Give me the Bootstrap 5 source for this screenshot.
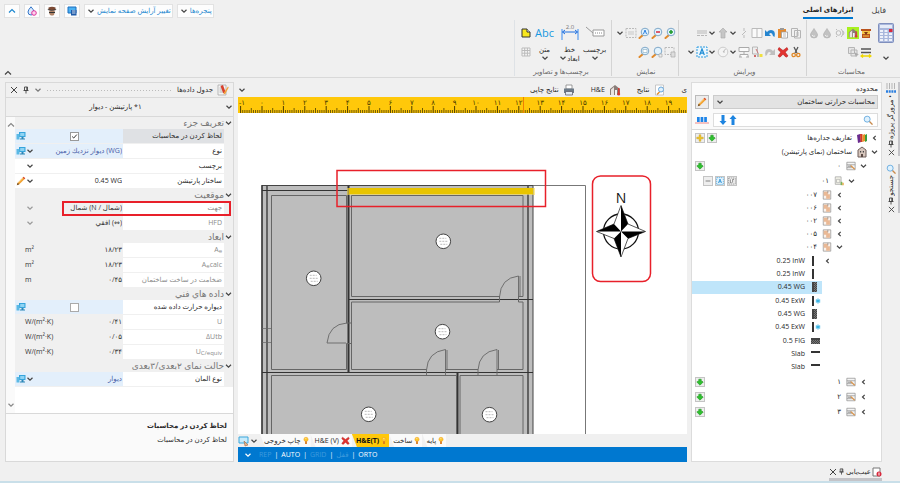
<!DOCTYPE html>
<html lang="fa" dir="rtl">
<head>
<meta charset="utf-8">
<meta name="viewport" content="width=device-width, initial-scale=1">
<title>H&amp;E</title>
<link href="https://cdn.jsdelivr.net/npm/bootstrap@5.3.0/dist/css/bootstrap.min.css" rel="stylesheet">
<style>
:root{--line:#d9d9d9;--ink:#2a2a2a;--dim:#8c8c8c;--blue:#0078d0}
body{font:7px/12px "Open Sans","DejaVu Sans",sans-serif;color:var(--ink);background:#f0f0f0;min-height:100vh}
button,select,input{font:inherit;color:inherit}
svg{display:block;flex:none}
.ico{width:12px;height:12px}
.ico-s{width:10px;height:10px}
.chev{width:8px;height:8px;fill:none;stroke:#444;stroke-width:1.2}
.flat{border:0;background:none;padding:0;display:flex;align-items:center;justify-content:center}
/* title row */
.topline{height:20px}
.topbtn{background:#fdfdfd;border:1px solid #e2e2e2;height:14px;min-width:16px;color:#1c87cf}
.topbtn.word{padding:0 1px 0 2px;gap:2px}
.maintab{color:#444;text-decoration:none;height:19px;padding-top:4px}
.maintab.file{font-size:8px;padding-right:14px;padding-left:2px}
.maintab.on{font-weight:700;color:#222;border-bottom:2px solid var(--blue)}
/* ribbon */
.ribbon{height:58px;border-bottom:1px solid var(--line)}
.rgroup{border-right:1px solid #d4d4d4;height:56px}
.rgroup.first{border-right:0}
.rgroup.view{padding:0 2px 0 4px}
.rlabel{color:#666;line-height:8px;text-align:center}
.tools{height:19px}
.tools .flat{width:13px;height:13px}
.tools .flat.dd{width:8px}
.toolset{padding-top:3px}
.calcbtn{width:20px;height:42px}
.bigbtn{width:25px;height:42px;line-height:9px}
.bigcap{margin-top:4px}
.abc{color:#1898e0;font-size:11px}
.bigico{height:18px;display:flex;align-items:center}
/* property panel */
.props{width:229px;border:1px solid var(--line);margin:4px 0 0 5px}
.ptitle{height:15px;border-bottom:1px solid var(--line)}
.ptitle .chev{stroke:#777}
.dots{height:3px;background-image:radial-gradient(#bbb 30%,transparent 35%);background-size:3px 3px}
.pselect{height:19px;border-bottom:1px solid var(--line)}
.pselect select,.prow select{appearance:none;border:0;background:transparent;outline:0;padding:0}
.pscroll{width:9px;background:#fafafa}
.gridbg{background:#f0f0f0}
.gridbg sub{font-size:6px;bottom:-1px}
.phead{height:12px;font-size:9px;color:#777}
.phead .chev{width:9px}
.prow{height:15px}
.prow label,.prow .pname{width:101px;background:#fff;border-bottom:1px solid #f0f0f0;padding:0 2px;line-height:14px;white-space:nowrap}
.prow .pval{border-bottom:1px solid #f0f0f0;line-height:14px;padding:0 1px;white-space:nowrap}
.prow .edge{width:9px}
.prow.ro{color:#333}
.prow.ro .pname,.prow.ro label{color:var(--dim)}
.prow.ro .chev{stroke:#999}
.prow.ed .pval{background:#fff}
.prow.hi .pval{background:#e3effb;color:#4860a8}
.prow.sel label{background:#dfe1e4}
.prow select{width:72px;flex:1;height:14px}
.prow .pic{width:10px}
.tick{width:9px;height:9px;border-radius:0!important;margin:0!important;float:none!important;border:1px solid #aaa}
.tick:checked{background-color:#fff;border-color:#999;background-image:url("data:image/svg+xml,%3Csvg xmlns='http://www.w3.org/2000/svg' viewBox='0 0 9 9'%3E%3Cpath d='M1.5 4.5l2 2 4-4.5' fill='none' stroke='%23222' stroke-width='1.2'/%3E%3C/svg%3E")}
.unit{width:60px;text-align:left;padding-left:9px}
.facing{position:relative}
.facing::after{content:"";position:absolute;right:2px;left:47px;top:0;bottom:0;border:2px solid #e8202a;pointer-events:none}
.pdesc{height:48px;background:#fafafa;border-top:1px solid var(--line);padding:5px 6px}
.pdesc p{line-height:14px;margin:0}
/* drawing area */
.drawing{margin:0 4px;min-width:0}
.viewbar{height:19px;padding-top:5px}
.ruler{background:#ffc80a;height:16px;width:100%}
.sheet{background:#fff;min-height:0}
.sheet svg{width:100%;height:100%;min-height:321px}
.dtabs{height:13px}
.dtab{border:0;background:#fafafa;height:13px;padding:0 2px 0 4px;clip-path:polygon(0 0,100% 0,100% 100%,5px 100%);white-space:nowrap;display:flex;align-items:center;gap:2px;line-height:12px}
.dtab.on{background:#ffc80a;font-weight:700;color:#111}
.dtabsel{padding-right:2px}
.status{background:var(--blue);height:15px;color:#fff;padding:0 6px;gap:3px}
.status .chev{stroke:#fff}
.status .off{color:#3f9bdd}
/* project panel */
.browser{width:191px;border:1px solid #dcdcdc;background:#fff;margin:4px 2px 0 0}
.bhead{background:#fafafa;border-bottom:1px solid var(--line);padding:0 3px;height:47px}
.bhead .scope{appearance:none;background:#e3e3e3;border:1px solid #ccc;border-radius:0;height:14px;padding:0 2px;width:100%}
.bhead .chev{position:absolute;left:3px;top:3px}
.sqb{width:14px;height:14px;border:1px solid #bbb;background:#ececec}
.find{background:#fff;border:1px solid #ddd;height:14px}
.find input{border:0;outline:0;min-width:0;width:40px;background:none;padding:0}
.trow{height:14px;padding:0 1px 0 3px}
.trow.t15{height:15px}
.kids .trow{height:auto;flex:1}
.rooms{height:66px}.elems{height:120px}
.l1{padding-right:12px}.l2{padding-right:24px}.l3{padding-right:36px}.l4{padding-right:48px}
.twist{width:11px}
.tico{width:14px;display:flex;justify-content:center}
.tname{padding-right:3px}
.picked{background:#bfe5fa}
.trow.full{padding-left:0}
.mini{width:10px;height:10px;border:1px solid #c4c4c4;background:#eee;margin-right:2px}
/* side tabs */
.siderail{width:16px;padding-top:4px}
.stab{border-right:2px solid #c4c4c8;gap:1px}
.vtext{writing-mode:vertical-rl;transform:rotate(180deg);line-height:12px;white-space:nowrap}
.bottom{height:21px;border-bottom:2px solid #c9dfe9;padding-right:18px}
.btab{border-bottom:3px solid #c4c4c8;height:16px;gap:1px}
</style>
<script src="https://cdn.jsdelivr.net/npm/bootstrap@5.3.0/dist/js/bootstrap.bundle.min.js"></script>
</head>
<body class="d-flex flex-column">
<svg width="0" height="0" class="position-absolute" aria-hidden="true">
<defs>
<symbol id="dn" viewBox="0 0 8 8"><path d="M1.500 2.800L4 5.200l2.500-2.400"/></symbol>
<symbol id="up" viewBox="0 0 8 8"><path d="M1 5.500L4 2.500l3 3"/></symbol>
<symbol id="lf" viewBox="0 0 8 8"><path d="M5.200 1.800L3 4l2.200 2.200"/></symbol>
<symbol id="x" viewBox="0 0 8 8"><path d="M1 1l6 6M7 1L1 7" stroke="#444" fill="none"/></symbol>
<symbol id="pin" viewBox="0 0 8 8"><path d="M2.500 1h3v3.500h-3zM1.500 4.500h5M4 4.500v3M4.800 1v3.500" stroke="#444" stroke-width=".9" fill="none"/></symbol>
<symbol id="pc" viewBox="0 0 10 10"><path d="M3 1h6.500v5H3z" fill="#35a4dc"/><path d="M4.200 2h4.200v3H4.200z" fill="#8fd3f3"/><path d="M5.500 6h2v1.500H9v1H4v-1h1.500z" fill="#2c87b8"/><path d="M.5 3h3v5.500h-3z" fill="#5bb9e5"/></symbol>
<symbol id="pencil" viewBox="0 0 12 12"><path d="M1 11l1-3 7-7 2 2-7 7z" fill="#f0a030"/><path d="M8 2l1-1.200 2.200 2L10 4z" fill="#d94a38"/><path d="M1 11l1-3 2 2z" fill="#6b4a28"/><path d="M3 8l5.500-5.500" stroke="#ffd27a"/></symbol>
<symbol id="note" viewBox="0 0 12 12"><path d="M1 1h8v10H1z" fill="#f4f4f4" stroke="#aaa" stroke-width=".8"/><path d="M2.500 4h4M2.500 6h4M2.500 8h4" stroke="#999" stroke-width=".7"/><path d="M3.500 2L6 1l2.500 7-.5 2-2-1.200z" fill="#d8402c"/><path d="M11 2.500l-4 6-.5 2 2-1 3.200-6z" fill="#f2a43c"/></symbol>
<symbol id="mag" viewBox="0 0 12 12"><path d="M5 8L1.500 11" stroke="#e08a2c" stroke-width="2" stroke-linecap="round"/><circle cx="7" cy="5" r="3.800" fill="#e3f3fd" stroke="#7fa8c8"/></symbol>
<symbol id="magr" viewBox="0 0 12 12"><path d="M7.500 7.500L11 11" stroke="#c88a4c" stroke-width="1.600" stroke-linecap="round"/><circle cx="5" cy="5" r="3.600" fill="#dff1fd" stroke="#5ba3dc"/></symbol>
<symbol id="calc" viewBox="0 0 16 20"><rect x=".5" y=".5" width="15" height="19" rx="1" fill="#a9b7dc" stroke="#7f8fbd"/><path d="M2 2h12v3H2z" fill="#e4ebf8"/><path d="M2 7h3v2H2zM6.500 7h3v2h-3zM2 10h3v2H2zM6.500 10h3v2h-3zM11 10h3v2h-3zM2 13h3v2H2zM6.500 13h3v2h-3zM11 13h3v2h-3zM2 16h3v2H2zM6.500 16h3v2h-3zM11 16h3v2h-3z" fill="#eef1fa"/><path d="M11 6h3.500v3H11z" fill="#d8283c"/></symbol>
<symbol id="brick" viewBox="0 0 12 12"><path d="M1 2h10v2H1zM2 7h8v4H2z" fill="#b9521c"/><path d="M2 4h8v3H2z" fill="#f5c445"/><path d="M4 5l2 3 2-3z" fill="#7c3512"/><path d="M3 9h6" stroke="#f5c445"/></symbol>
<symbol id="house" viewBox="0 0 12 12"><path d="M1 5l5-4 5 4v6H1z" fill="#8a7d78"/><path d="M2 5.500L5 3v8H2z" fill="#e9e4e0"/><path d="M6 6h2v5H6z" fill="#f3f3f3"/><path d="M9 4h1.500v6H9z" fill="#d83a34"/><circle cx="9.700" cy="10" r="1.500" fill="#d83a34"/></symbol>
<symbol id="drop" viewBox="0 0 12 12"><path d="M6 1.500C8 5 9.500 6 9.500 8a3.500 3 0 0 1-7 0C2.500 6 4 5 6 1.500z" fill="#c2c2c2" stroke="#aaa" stroke-width=".6"/><path d="M4 8q1 2 3 1" stroke="#eee" fill="none"/></symbol>
<symbol id="sun" viewBox="0 0 12 12"><circle cx="4.500" cy="6" r="2.300" fill="none" stroke="#bbb"/><path d="M2 2l1 1M2 10l1-1M7 2q4 4 0 8M9 4q2 2 0 4" fill="none" stroke="#bbb"/></symbol>
<symbol id="layers" viewBox="0 0 12 12"><path d="M1.500 1.500h6v6h-6zM4 4h6v6H4z" fill="#e6e6e6" stroke="#b5b5b5"/><path d="M7 6l2 5 1-2 2-.5z" fill="#aaa"/></symbol>
<symbol id="dimy" viewBox="0 0 12 12"><path d="M1 3h10M1 6.500h10" stroke="#555" stroke-width="1.600"/><path d="M1 10h10M3 8.500L1 10l2 1.500M9 8.500l2 1.500-2 1.500" stroke="#f0d800" fill="none" stroke-width="1.300"/></symbol>
<symbol id="copy" viewBox="0 0 12 12"><path d="M1.500 1.500h6v8h-6zM4.500 3.500h6v7.500h-6z" fill="#f1f1f1" stroke="#b4b4b4"/><path d="M6 6h3M6 8h3" stroke="#bbb"/></symbol>
<symbol id="paste" viewBox="0 0 12 12"><path d="M1 2h8v9H1z" fill="#e68a2d"/><path d="M3 1h4v2H3z" fill="#999"/><path d="M4.500 5h6v6h-6z" fill="#fff" stroke="#999" stroke-width=".8"/><path d="M6 7h3M6 9h3" stroke="#bbb"/></symbol>
<symbol id="undo" viewBox="0 0 12 12"><path d="M1 3v6h6L5 7q3-2.500 4 2l1.500 1Q12 3 7 3 4.500 3 3 5z" fill="#2585cf"/></symbol>
<symbol id="redo" viewBox="0 0 12 12"><path d="M11 3v6H5l2-2q-3-2.500-4 2l-1.500 1Q0 3 5 3q2.500 0 4 2z" fill="#bfbfbf"/></symbol>
<symbol id="split" viewBox="0 0 12 12"><path d="M1 1.500h10v9H1zM6 1.500v9" fill="#fafafa" stroke="#bbb"/></symbol>
<symbol id="cutl" viewBox="0 0 12 12"><path d="M6 1v3M6 8v3M8 4L4 8" stroke="#bbb" fill="none"/></symbol>
<symbol id="arrg" viewBox="0 0 12 12"><path d="M6 1l4 4H8v6H4V5H2z" fill="#c6c6c6" stroke="#aaa" stroke-width=".6"/></symbol>
<symbol id="lines" viewBox="0 0 12 12"><path d="M1 4h10M1 6h10M1 8.500h3M5 8.500h3M9 8.500h2" stroke="#b8b8b8"/></symbol>
<symbol id="scis" viewBox="0 0 12 12"><path d="M4 1l3 6M8 1L5 7" stroke="#555" stroke-width="1.300"/><circle cx="3.700" cy="9" r="1.700" fill="none" stroke="#e08a2a" stroke-width="1.300"/><circle cx="8.300" cy="9" r="1.700" fill="none" stroke="#e08a2a" stroke-width="1.300"/></symbol>
<symbol id="del" viewBox="0 0 12 12"><path d="M2 1.500l4 3 4-3 1 2-2.800 2.700L11 10l-2 1.200-3-3-3 3L1 10l2.800-3.800L1 3.500z" fill="#e2332f" stroke="#b61c1c" stroke-width=".6"/></symbol>
<symbol id="report" viewBox="0 0 12 12"><path d="M1.500 1h5v7h-5z" fill="#eee" stroke="#aaa" stroke-width=".8"/><path d="M5 3l2 4" stroke="#c77"/><path d="M6 7h2v4H6z" fill="#bbb"/><path d="M8.500 8h3v3h-3z" fill="#f0e03e"/><path d="M3 9h2v2H3z" fill="#d06a6a"/></symbol>
<symbol id="tree" viewBox="0 0 12 12"><path d="M1 1.500h10v4H1zM6 5.500v3M2 11V8.500h8V11M1 11h3M8 11h3" fill="#fafafa" stroke="#aaa"/></symbol>
<symbol id="clock" viewBox="0 0 12 12"><circle cx="6" cy="6" r="4.800" fill="#f4f4f4" stroke="#ccc"/><path d="M6 6l2.500-3M6 6h2" stroke="#bbb"/></symbol>
<symbol id="texta" viewBox="0 0 12 12"><path d="M1 1h10v10H1z" fill="#eaf6fe" stroke="#2b9be0" stroke-dasharray="2 1"/><path d="M3.700 9L6 3l2.300 6M4.500 7.200h3" fill="none" stroke="#1e8cd4" stroke-width="1.200"/></symbol>
<symbol id="dash" viewBox="0 0 12 12"><path d="M1 1.500h10v9H1z" fill="none" stroke="#bbb" stroke-dasharray="2 1"/><path d="M3 5h6M3 7h6" stroke="#c8c8c8"/></symbol>
<symbol id="dashd" viewBox="0 0 12 12"><path d="M1 1.500h10v9H1z" fill="#f6f6f6" stroke="#777" stroke-dasharray="2 1"/><path d="M3.500 3.500v5h2M7 8.500v-5h2" stroke="#555" fill="none"/></symbol>
<symbol id="dashh" viewBox="0 0 12 12"><path d="M1 1.500h9v7H1z" fill="none" stroke="#bbb" stroke-dasharray="2 1"/><path d="M7 6h4v5H7z" fill="#ddd" stroke="#aaa" stroke-width=".7"/></symbol>
<symbol id="doc" viewBox="0 0 10 10"><path d="M1 1h5l3 3v5H1z" fill="#f8e71e" stroke="#333"/><path d="M6 1v3h3" fill="#fff" stroke="#333"/></symbol>
<symbol id="gridi" viewBox="0 0 10 10"><path d="M1 1h8v8H1zM1 3.500h8M1 6.200h8M3.700 1v8M6.400 1v8" fill="#f6f6f6" stroke="#bbb"/></symbol>
<symbol id="printer" viewBox="0 0 12 12"><path d="M3 1h6v4H3z" fill="#fff" stroke="#777" stroke-width=".7"/><path d="M1 4.500h10V9H1z" fill="#6c7a88"/><path d="M2.500 7.500h7V11h-7z" fill="#dfe9f2" stroke="#556" stroke-width=".7"/></symbol>
<symbol id="res" viewBox="0 0 12 12"><path d="M1.500 1h8v10h-8z" fill="#fff" stroke="#bbb" stroke-width=".8"/><path d="M5.500 8L3 10.500" stroke="#e08a2c" stroke-width="1.400"/><circle cx="7" cy="5.500" r="2.500" fill="#dff1fd" stroke="#6aa8dc"/></symbol>
<symbol id="green" viewBox="0 0 10 10"><path d="M5 9L1 5l1.500-1h1V1.500h3V4h1L9 5z" fill="#2fc12f" stroke="#1b8f1b" stroke-width=".7"/></symbol>
<symbol id="plus" viewBox="0 0 10 10"><path d="M4 1h2v3h3v2H6v3H4V6H1V4h3z" fill="#f5c81c" stroke="#c49a10" stroke-width=".6"/></symbol>
<symbol id="minus" viewBox="0 0 10 10"><path d="M2 4h6v2H2z" fill="#aaa"/></symbol>
<symbol id="books" viewBox="0 0 12 12"><path d="M1 3l3-1 1 8-3 1z" fill="#6a2c8e"/><path d="M4 2h2.500v8H4.500z" fill="#d23b28"/><path d="M6.500 3L9 2v7l-2.500 1z" fill="#e89324"/><path d="M9 3l2-1v7l-2 1z" fill="#3b9c3b"/></symbol>
<symbol id="bld" viewBox="0 0 12 12"><path d="M2 4l4-3 4 3v7H2z" fill="#d6c6bd" stroke="#6f5f5a"/><path d="M4 5h1.200v1.500H4zM6.800 5H8v1.500H6.800z" fill="#444"/><path d="M5 8h2v3H5z" fill="#5b4a44"/></symbol>
<symbol id="floor" viewBox="0 0 12 12"><path d="M1 1.500h10v9H1zM1 4.500h10M1 8h6" fill="#f5f5f5" stroke="#888" stroke-width=".8"/><path d="M5.500 5.500l5 4.500" stroke="#d5924c" stroke-width="1.500"/><path d="M2 6.200h4" stroke="#777"/></symbol>
<symbol id="plan" viewBox="0 0 12 12"><path d="M1.500 3V1h7v9h-7z" fill="#f4f4ea" stroke="#999" stroke-width=".8"/><path d="M3 4h4v4H3z" fill="none" stroke="#aaa" stroke-width=".8"/><path d="M8 7h2v4H8z" fill="#79b55a"/><path d="M10 8h1.600v3H10z" fill="#e6a03c"/></symbol>
<symbol id="room" viewBox="0 0 12 12"><path d="M1.500 1h9v10h-9z" fill="#fbf3ec" stroke="#888" stroke-width=".8"/><path d="M2 2h5v3h2.500v5.500H5V7H2z" fill="#eab995"/><path d="M7 1v3" stroke="#888" stroke-width=".8"/></symbol>
<symbol id="snow" viewBox="0 0 6 6"><path d="M3 .5v5M.8 1.700l4.400 2.600M5.200 1.700L.8 4.300" stroke="#3bb4e4" stroke-width="1.100"/></symbol>
<symbol id="walls" viewBox="0 0 12 12"><path d="M2 1v6M4.500 1v6M7 1v6M9.500 1v6" stroke="#b5b5b5"/><path d="M1 9.500h10" stroke="#2b7fe0" stroke-width="2.400" stroke-dasharray="2 .7"/></symbol>
<symbol id="bulb" viewBox="0 0 8 10"><circle cx="4" cy="3.500" r="2.800" fill="#fdc62c" stroke="#f2a52a" stroke-width=".7"/><path d="M3 2.500h1.500" stroke="#fff3c0"/><path d="M2.800 6h2.400v3.500H2.800z" fill="#d97a1e"/></symbol>
<pattern id="hatch" width="2" height="2" patternUnits="userSpaceOnUse"><path d="M0 0h1v1H0zM1 1h1v1H1z" fill="#777"/></pattern>
</defs>
</svg>

<header>
<div class="topline d-flex align-items-start justify-content-between">
 <nav class="d-flex gap-3">
  <a class="maintab file" href="#">فایل</a>
  <a class="maintab on" href="#">ابزارهای اصلی</a>
 </nav>
 <div class="d-flex gap-1 pt-1 ps-1 align-items-start">
  <button class="flat topbtn word">پنجره‌ها<svg class="chev"><use href="#dn"/></svg></button>
  <button class="flat topbtn word">تغییر آرایش صفحه نمایش<svg class="chev"><use href="#dn"/></svg></button>
  <button class="flat topbtn" aria-label="نمایش"><svg class="ico-s" viewBox="0 0 10 10"><path d="M1 1h8v6H1z" fill="#4bb1f2" stroke="#1b6fc0"/><path d="M4 4h5.500v5.500H4z" fill="#1e5aa8"/><path d="M5 5h3.500M5 7h3.500" stroke="#fff" stroke-width=".8"/></svg></button>
  <button class="flat topbtn" aria-label="سازنده"><svg class="ico-s" viewBox="0 0 10 10"><path d="M1.500 1.500q3.500-1.500 7 0v2.500q-3.500 1-7 0z" fill="#7c4a34"/><path d="M.8 3.500q4 2 8.400 0" stroke="#333" stroke-width=".8" fill="none"/><path d="M2 5.200q4-1 6 0L7 9q-2 1-3.500.3-1.500-1-1.500-4.100z" fill="#b08468"/><path d="M2 6.500h6" stroke="#333"/></svg></button>
  <button class="flat topbtn" aria-label="رطوبت"><svg class="ico-s" viewBox="0 0 10 10"><path d="M4 .8Q7 4 7 6A3 3 0 0 1 1 6Q1 4 4 .8z" fill="#dceafd" stroke="#3577c8"/><circle cx="7" cy="7" r="2.300" fill="#fbd3ec" stroke="#e0329c"/></svg></button>
  <button class="flat topbtn" aria-label="بستن نوار"><svg class="chev"><use href="#up" stroke="#1c87cf"/></svg></button>
 </div>
</div>
<div class="ribbon d-flex">
 <section class="rgroup first pe-1 d-flex flex-column justify-content-between">
  <div class="d-flex gap-1">
   <button class="flat calcbtn flex-column justify-content-between toolset" aria-label="محاسبه"><svg width="16" height="20"><use href="#calc"/></svg><svg class="chev"><use href="#dn"/></svg></button>
   <div class="toolset"><div class="tools d-flex align-items-center">
     <button class="flat" aria-label="مصالح"><svg class="ico"><use href="#brick"/></svg></button><button class="flat" aria-label="H&amp;E"><svg class="ico" viewBox="0 0 12 12"><rect width="12" height="12" fill="#a8f01e"/><use href="#house" x="1" y="1" width="10" height="10"/></svg></button><button class="flat" aria-label="تابش"><svg class="ico"><use href="#sun"/></svg></button><button class="flat" aria-label="رطوبت ۱"><svg class="ico"><use href="#drop"/></svg></button><button class="flat" aria-label="رطوبت ۲"><svg class="ico"><use href="#drop"/></svg></button></div>
    <div class="tools d-flex align-items-center"><button class="flat" aria-label="اندازه"><svg class="ico"><use href="#dimy"/></svg></button><button class="flat" aria-label="لایه"><svg class="ico"><use href="#layers"/></svg></button></div></div>
  </div>
  <div class="rlabel">محاسبات</div>
 </section>
 <section class="rgroup pe-1 ps-2 d-flex flex-column justify-content-between">
  <div class="toolset"><div class="tools d-flex align-items-center">
    <button class="flat" aria-label="کپی"><svg class="ico"><use href="#copy"/></svg></button><button class="flat" aria-label="چسباندن"><svg class="ico"><use href="#paste"/></svg></button><button class="flat" aria-label="واگرد"><svg class="ico"><use href="#undo"/></svg></button><button class="flat" aria-label="تقسیم"><svg class="ico"><use href="#split"/></svg></button><button class="flat" aria-label="برش خط"><svg class="ico"><use href="#cutl"/></svg></button><button class="flat dd" aria-label="بیشتر"><svg class="chev"><use href="#dn"/></svg></button><button class="flat" aria-label="بالا"><svg class="ico"><use href="#arrg"/></svg></button><button class="flat dd" aria-label="بیشتر"><svg class="chev"><use href="#dn"/></svg></button><button class="flat" aria-label="خطوط"><svg class="ico"><use href="#lines"/></svg></button></div>
   <div class="tools d-flex align-items-center">
    <button class="flat" aria-label="برش"><svg class="ico"><use href="#scis"/></svg></button><button class="flat" aria-label="حذف"><svg class="ico"><use href="#del"/></svg></button><button class="flat" aria-label="ازنو"><svg class="ico"><use href="#redo"/></svg></button><button class="flat" aria-label="گزارش"><svg class="ico"><use href="#report"/></svg></button><button class="flat" aria-label="ساختار"><svg class="ico"><use href="#tree"/></svg></button><button class="flat dd" aria-label="بیشتر"><svg class="chev"><use href="#dn"/></svg></button><button class="flat" aria-label="زاویه"><svg class="ico"><use href="#clock"/></svg></button><button class="flat dd" aria-label="بیشتر"><svg class="chev"><use href="#dn"/></svg></button><button class="flat" aria-label="انتخاب متن"><svg class="ico"><use href="#texta"/></svg></button><button class="flat dd" aria-label="بیشتر"><svg class="chev"><use href="#dn"/></svg></button></div></div>
  <div class="rlabel">ویرایش</div>
 </section>
 <section class="rgroup view d-flex flex-column justify-content-between">
  <div class="toolset"><div class="tools d-flex align-items-center">
    <button class="flat" aria-label="بزرگنمایی"><svg class="ico" viewBox="0 0 12 12"><use href="#mag"/><path d="M7 3v4M5 5h4" stroke="#1c9a2a" stroke-width="1.500"/></svg></button><button class="flat" aria-label="کوچکنمایی"><svg class="ico" viewBox="0 0 12 12"><use href="#mag"/><path d="M5 5h4" stroke="#d8283c" stroke-width="1.500"/></svg></button><button class="flat" aria-label="همه"><svg class="ico" viewBox="0 0 12 12"><use href="#mag"/><path d="M5.500 7L7 3l1.500 4" stroke="#2b7fe0" fill="none"/></svg></button><button class="flat" aria-label="قاب"><svg class="ico"><use href="#dash"/></svg></button><button class="flat dd" aria-label="بیشتر"><svg class="chev"><use href="#dn"/></svg></button></div>
   <div class="tools d-flex align-items-center">
    <button class="flat" aria-label="جابجایی"><svg class="ico"><use href="#dashh"/></svg></button><button class="flat" aria-label="پنجره"><svg class="ico" viewBox="0 0 12 12"><use href="#mag"/><path d="M8 8h3v3H8z" fill="#eee" stroke="#aaa" stroke-width=".7"/></svg></button><button class="flat" aria-label="صفحه"><svg class="ico" viewBox="0 0 12 12"><use href="#mag"/><path d="M5 3.500h4v3H5z" fill="#fff" stroke="#8ab" stroke-width=".6"/></svg></button></div></div>
  <div class="rlabel">نمایش</div>
 </section>
 <section class="rgroup pe-1 d-flex flex-column justify-content-between border-start">
  <div class="d-flex toolset">
   <button class="flat bigbtn flex-column justify-content-start"><span class="bigico"><svg width="20" height="12" viewBox="0 0 20 12"><path d="M1 1l7 6M8 4h11v6H8z" fill="#fff" stroke="#999"/><path d="M10 7h7" stroke="#888" stroke-dasharray="1 1"/></svg></span><span class="bigcap">برچسب</span><svg class="chev"><use href="#dn"/></svg></button>
   <button class="flat bigbtn flex-column justify-content-start"><span class="bigico"><svg width="18" height="18" viewBox="0 0 18 18" direction="ltr"><text x="9" y="6" font-size="6" text-anchor="middle" fill="#777">2.0</text><path d="M1 6v11M17 6v11" stroke="#3b8cf0"/><path d="M1.500 9h15M4 7L1.500 9 4 11M14 7l2.500 2-2.500 2" stroke="#1d6fe0" fill="none"/></svg></span><span class="bigcap">خط</span><span class="d-flex">ابعاد<svg class="chev"><use href="#dn"/></svg></span></button>
   <button class="flat bigbtn flex-column justify-content-start"><span class="bigico abc">Abc</span><span class="bigcap">متن</span><svg class="chev"><use href="#dn"/></svg></button>
   <div class="ps-1"><div class="tools d-flex align-items-center"><button class="flat" aria-label="یادداشت"><svg class="ico-s"><use href="#doc"/></svg></button></div><div class="tools d-flex align-items-center"><button class="flat" aria-label="جدول"><svg class="ico-s"><use href="#gridi"/></svg></button></div></div>
  </div>
  <div class="rlabel">برچسب‌ها و تصاویر</div>
 </section>
 <button class="flat me-auto align-self-end ps-1" aria-label="جمع کردن نوار"><svg class="chev"><use href="#up"/></svg></button>
</div>
</header>

<main class="d-flex flex-grow-1">
 <aside class="siderail">
  <div class="stab d-flex flex-column align-items-center mb-2"><svg class="ico"><use href="#walls"/></svg><button class="flat vtext">• مرورگر پروژه</button><svg width="8" height="8"><use href="#pin"/></svg><svg width="7" height="7"><use href="#x"/></svg></div>
  <div class="stab d-flex flex-column align-items-center"><svg class="ico-s"><use href="#magr"/></svg><button class="flat vtext">جستجو</button><svg width="8" height="8"><use href="#pin"/></svg><svg width="7" height="7"><use href="#x"/></svg></div>
 </aside>

 <section class="browser flex-shrink-0">
  <div class="bhead">
   <label for="scope" class="d-block">محدوده</label>
   <div class="d-flex gap-1"><div class="position-relative flex-grow-1"><select id="scope" class="scope d-block"><option>محاسبات حرارتی ساختمان</option></select><svg class="chev"><use href="#dn"/></svg></div><button class="flat sqb" aria-label="ویرایش"><svg class="ico-s"><use href="#pencil"/></svg></button></div>
   <div class="d-flex gap-1 pt-1"><div class="find d-flex align-items-center flex-grow-1 px-1"><svg class="ico-s"><use href="#magr"/></svg><input class="flex-grow-1" type="text" aria-label="جستجو"><button class="flat" aria-label="قبلی"><svg class="ico-s" viewBox="0 0 10 10"><path d="M5 0l3.500 4H6.500v6h-3V4h-2z" fill="#1d84e0"/></svg></button><button class="flat" aria-label="بعدی"><svg class="ico-s" viewBox="0 0 10 10"><path d="M5 10L1.500 6h2V0h3v6h2z" fill="#1d84e0"/></svg></button></div>
   <button class="flat" aria-label="دیوارها"><svg width="14" height="10" viewBox="0 0 14 10"><path d="M0 8h14" stroke="#e88"/><path d="M2 2h2.700v5H2zM5.600 2h2.700v5H5.600zM9.200 2h2.700v5H9.200z" fill="#1d84e8"/></svg></button></div>
  </div>
  <div>
   <div class="trow t15 d-flex align-items-center"><svg class="chev twist"><use href="#lf"/></svg><span class="tico"><svg class="ico"><use href="#books"/></svg></span><span class="tname flex-grow-1">تعاریف جداره‌ها</span><button class="flat mini" aria-label="باز"><svg width="8" height="8"><use href="#green"/></svg></button><button class="flat mini" aria-label="افزودن"><svg width="8" height="8"><use href="#plus"/></svg></button></div>
   <div class="trow d-flex align-items-center"><svg class="chev twist"><use href="#dn"/></svg><span class="tico"><svg class="ico"><use href="#bld"/></svg></span><span class="tname">ساختمان (نمای پارتیشن)</span></div>
   <div class="trow l1 d-flex align-items-center"><svg class="chev twist"><use href="#dn"/></svg><span class="tico"><svg class="ico-s"><use href="#floor"/></svg></span><span class="tname flex-grow-1">۰</span><button class="flat mini" aria-label="باز"><svg width="8" height="8"><use href="#green"/></svg></button></div>
   <div class="trow t15 l2 d-flex align-items-center"><svg class="chev twist"><use href="#dn"/></svg><span class="tico"><svg class="ico-s"><use href="#plan"/></svg></span><span class="tname flex-grow-1">۰۱</span><button class="flat mini" aria-label="قاب"><svg width="8" height="8"><use href="#dashd"/></svg></button><button class="flat mini" aria-label="متن"><svg width="8" height="8"><use href="#texta"/></svg></button><button class="flat mini ms-2" aria-label="بستن"><svg width="8" height="8"><use href="#minus"/></svg></button></div>
   <div class="kids rooms d-flex flex-column" id="rooms"></div>
   <div class="kids elems d-flex flex-column" id="elems"></div>
   <div id="floors"></div>
  </div>
 </section>

 <section class="drawing d-flex flex-column flex-grow-1">
  <div class="viewbar d-flex gap-3 align-items-center">
   <span>ی</span>
   <button class="flat gap-1"><svg class="ico"><use href="#res"/></svg>نتایج</button>
   <button class="flat gap-1"><svg class="ico"><use href="#house"/></svg>H&amp;E</button>
   <button class="flat gap-1"><svg class="ico"><use href="#printer"/></svg>نتایج چاپی</button>
   <button class="flat me-auto" aria-label="بیشتر"><svg class="chev"><use href="#dn"/></svg></button>
  </div>
  <svg class="ruler" id="ruler" direction="ltr"></svg>
  <div class="sheet flex-grow-1">
  <svg direction="ltr"><g transform="translate(-238 -113)">
   <path d="M532 185.500h53.500V600" fill="none" stroke="#777"/>
   <path d="M262 185.500h271V600H262z" fill="#bdbdbd" stroke="#444"/>
   <g fill="none" stroke="#333"><path d="M262 185v300M267 186v300M528 186v300" stroke-width="1.300"/><path d="M262 190.500h270M349 299.500h184M262 372.500h271"/><path d="M348.500 186v187M457.500 373v100" stroke-width="2"/></g>
   <g fill="none" stroke="#666"><path d="M351 323h-4.500V195.500h-75v174h75v-26h4.500M499.500 296.500h-148v-101h171.500v101h-4.500M499.500 296v6h-148v67.500h75M518.500 296v6h4.500v67.500h-26M445.500 369.500h32.500M271.500 440v-64.500h185V440M460 440v-64.500h63V440"/>
   <path d="M499.500 297q1-19 19-21v21M520 276v20.500M347 323q-18 1-20 20h19M426.500 375v-5q1-18 19-20.500v26M447 350v20M478 375v-5q1-18 19-20.500v26M498.500 350v20" stroke-width=".9"/><path d="M262 328.500h9.500M262 342.500h9.500M267 331v9" stroke-width=".7"/></g>
   <path d="M347 191.500h188" stroke="#ffe14a" stroke-width="7" opacity=".6"/><path d="M349 191h184" stroke="#e8c400" stroke-width="6"/>
   <g id="marks" fill="#fff" stroke="#444"></g>
   <g fill="none" stroke="#e8202a" stroke-width="1.500"><rect x="337" y="170.500" width="208.500" height="36"/><rect x="592.500" y="176" width="58" height="105.500" rx="8"/></g>
   <text x="621" y="203" text-anchor="middle" font-size="14" fill="#111">N</text>
   <circle cx="621" cy="231.500" r="17.500" fill="#fff" stroke="#111" stroke-width="1.300"/>
   <path d="M621 205.500l7 18.500 17.500 7.500-17.500 7-7 18.500-7-18.500-17.500-7 17.500-7.500z" fill="#fff" stroke="#111" stroke-width=".7"/>
   <path d="M621 231.500v-26l7 18.500zM621 231.500h24.500l-17.500 7zM621 231.500V257l-7-18.500zM621 231.500h-24.500l17.500-7.500z" fill="#000"/>
  </g></svg></div>
  <div class="dtabs d-flex align-items-center" dir="ltr">
   <svg class="ico" viewBox="0 0 12 12"><path d="M1 2h9v6H1z" fill="#c8ebfb" stroke="#3aa7dc"/><path d="M6 6l4 4-3 1z" fill="#eab38a" stroke="#a06a44" stroke-width=".6"/></svg><span class="dtabsel"><svg class="chev"><use href="#dn"/></svg></span>
   <button class="dtab" dir="rtl"><svg width="6" height="9"><use href="#bulb"/></svg>چاپ خروجی</button>
   <button class="dtab" dir="rtl"><svg width="9" height="9"><use href="#del"/></svg><bdi dir="ltr">H&amp;E (V)</bdi></button>
   <button class="dtab on" dir="rtl"><svg width="6" height="9"><use href="#bulb"/></svg><bdi dir="ltr">H&amp;E(T)</bdi></button>
   <button class="dtab" dir="rtl"><svg width="6" height="9"><use href="#bulb"/></svg>ساخت</button>
   <button class="dtab" dir="rtl"><svg width="6" height="9"><use href="#bulb"/></svg>پایه</button>
  </div>
  <div class="status d-flex align-items-center" dir="ltr"><svg class="chev me-1"><use href="#dn"/></svg><span class="off">REP</span><span>|</span><span>AUTO</span><span>|</span><span class="off">GRID</span><span>|</span><span class="off">قفل</span><span>|</span><span>ORTO</span></div>
 </section>

 <section class="props d-flex flex-column flex-shrink-0">
  <div class="ptitle d-flex align-items-center gap-1 px-1"><svg class="ico"><use href="#note"/></svg><span>جدول داده‌ها</span><span class="dots flex-grow-1"></span><svg class="chev"><use href="#dn"/></svg><svg width="8" height="8"><use href="#pin"/></svg><svg width="8" height="8"><use href="#x"/></svg></div>
  <div class="pselect d-flex align-items-center"><svg class="chev"><use href="#dn"/></svg><select class="flex-grow-1 text-center" aria-label="جزء"><option>۱* پارتیشن - دیوار</option></select></div>
  <div class="d-flex flex-grow-1 bg-white">
   <div class="flex-grow-1" id="grid"></div>
   <div class="pscroll d-flex flex-column justify-content-between align-items-center py-1"><svg class="chev"><use href="#up" stroke="#888"/></svg><svg class="chev"><use href="#dn" stroke="#888"/></svg></div>
  </div>
  <div class="pdesc"><p class="fw-bold">لحاظ کردن در محاسبات</p><p>لحاظ کردن در محاسبات</p></div>
 </section>
</main>

<footer class="bottom d-flex align-items-end"><button class="flat btab"><svg class="ico-s" viewBox="0 0 10 10"><path d="M1 1h7v8H1z" fill="#fff" stroke="#777"/><circle cx="7" cy="7" r="2.500" fill="#d8283c"/><path d="M7 5.500v3" stroke="#fff"/></svg>عیب‌یابی<svg width="7" height="7"><use href="#pin"/></svg><svg width="8" height="8"><use href="#x"/></svg></button></footer>

<script>
const el = id => document.getElementById(id);
const icon = (n, c) => `<svg class="${c}"><use href="#${n}"/></svg>`;

/* property grid: heading strings and [kind, name, value, unit, icon] rows */
const rows = [
 'تعریف جزء', ['check sel','لحاظ کردن در محاسبات',true], ['hi list','نوع','(WG) دیوار نزدیك زمین','','pc'], ['ed list','برچسب',''], ['ed list','ساختار پارتیشن','\u200e0.45 WG','','pencil'],
 'موقعیت', ['ro list facing','جهت','(شمال / N) شمال'], ['ro list','HFD','(⇔) افقي'],
 'ابعاد', ['ro','A<sub>e</sub>','۱۸/۲۳','m²'], ['ro','A<sub>e</sub>calc','۱۸/۲۳','m²'], ['ro','ضخامت در ساخت ساختمان','۰/۴۵','m'],
 'داده هاي فني', ['check','دیواره حرارت داده شده',false], ['ro','U','۰/۴۱','W/(m²·K)'], ['ro','ΔUtb','۰/۰۵','W/(m²·K)'], ['ro','U<sub>C/equiv</sub>','۰/۳۴','W/(m²·K)'],
 'حالت نمای ۲بعدی/۳بعدی', ['hi list','نوع المان','دیوار','','pc']];
el('grid').innerHTML = '<div class="gridbg">' + rows.map((r, i) => {
  if (typeof r === 'string') return `<div class="phead d-flex align-items-center">${icon('dn','chev')}<span>${r}</span></div>`;
  const [k, n, v, u, ic] = r;
  let val, name = `<label for="p${i}">${n}</label>`, cls = k;
  if (k.startsWith('check')) { cls += ' hi'; val = `<span class="flex-grow-1 d-flex justify-content-center"><input id="p${i}" type="checkbox" class="form-check-input tick" ${v ? 'checked' : ''}></span>${icon('pc','ico-s')}`; }
  else if (k.includes('list')) val = `<select id="p${i}"><option>${v}</option></select>${icon('dn','chev')}<span class="pic">${ic ? icon(ic,'ico-s') : ''}</span>`;
  else { name = `<span class="pname">${n}</span>`; val = `<bdi>${v}</bdi><span class="flex-grow-1"></span><bdi class="unit" dir="ltr">${u}</bdi>`; }
  return `<div class="prow d-flex ${cls}"><span class="edge"></span>${name}<div class="pval d-flex align-items-center flex-grow-1">${val}</div></div>`;
}).join('') + '</div>';

/* project tree */
const node = (lvl, tw, ic, name, extra = '') => `<div class="trow l${lvl} d-flex align-items-center">${tw ? icon(tw,'chev twist') : '<span class="twist"></span>'}<span class="tico">${ic}</span><span class="tname flex-grow-1">${name}</span>${extra}</div>`;
el('rooms').innerHTML = ['۰۰۷','۰۰۶','۰۰۲','۰۰۵','۰۰۴'].map((n, i) => node(3, i < 4 ? 'lf' : 'dn', icon('room','ico-s'), n)).join('');
const wall = {
  thin: '<path d="M3 0h2v10H3z" fill="#333"/>',
  ext: '<path d="M3 0h2v10H3z" fill="#333"/><use href="#snow" x="6" y="2" width="6" height="6"/>',
  thick: '<path d="M3 0h5v10H3z" fill="#444"/><path d="M5 0h3v10H5z" fill="url(#hatch)"/>',
  floor: '<path d="M2 2h9v6H2z" fill="#444"/><path d="M2 4h9v4H2z" fill="url(#hatch)"/>',
  slab: '<path d="M2 2h9v2H2z" fill="#333"/>'};
el('elems').innerHTML = [['thin','0.25 InW'],['thin','0.25 InW'],['thick','0.45 WG'],['ext','0.45 ExW'],['thick','0.45 WG'],['ext','0.45 ExW'],['floor','0.5 FlG'],['slab','Slab'],['slab','Slab']].map(([w, n], i) =>
  `<div class="trow l4 full d-flex align-items-stretch">${i ? '<span class="twist"></span>' : icon('lf','chev twist align-self-center')}<div class="d-flex flex-grow-1 align-items-center ${i === 2 ? 'picked' : ''}"><span class="tico"><svg width="12" height="10">${wall[w]}</svg></span><bdi class="tname">${n}</bdi></div></div>`).join('');
const openBtn = '<button class="flat mini" aria-label="باز"><svg width="8" height="8"><use href="#green"/></svg></button>';
el('floors').innerHTML = ['۱','۲','۳'].map(n => node('1 t15','lf',icon('floor','ico-s'), n, openBtn)).join('');

/* ruler: one label per metre, ten ticks between labels */
const step = 21.4, zero = 24;
function drawRuler() {
  const width = el('ruler').getBoundingClientRect().width;
  let out = '';
  for (let i = -1; zero + i * step < width; i++) {
    const x = zero + i * step, n = i < 0 ? '-۱' : i.toLocaleString('fa');
    if (x < width - 6) out += `<text x="${Math.max(x, 4)}" y="8" font-size="7" text-anchor="middle" fill="#4a3c00">${n}</text>`;
    for (let j = 0; j < 10; j++) out += `<path d="M${x + j * step / 10} 16v-${j ? (j === 5 ? 5 : 3) : 7}" stroke="#4a3c00" stroke-width="${j ? .8 : 1}"/>`;
  }
  el('ruler').innerHTML = out + '<path d="M285.500 0v16" stroke="#f08000"/>';
}
drawRuler();
addEventListener('resize', drawRuler);

/* room marks */
el('marks').innerHTML = [[313.7,278.3],[443.3,241.3],[442.5,331.7],[368.7,414.3],[489.5,414.7]].map(([x, y]) =>
  `<circle cx="${x}" cy="${y}" r="7.3"/><path d="M${x-4} ${y-3}h7M${x-4} ${y}h8M${x-3} ${y+3}h7" stroke="#bbb" stroke-dasharray="2 1"/>`).join('');
</script>
</body>
</html>
